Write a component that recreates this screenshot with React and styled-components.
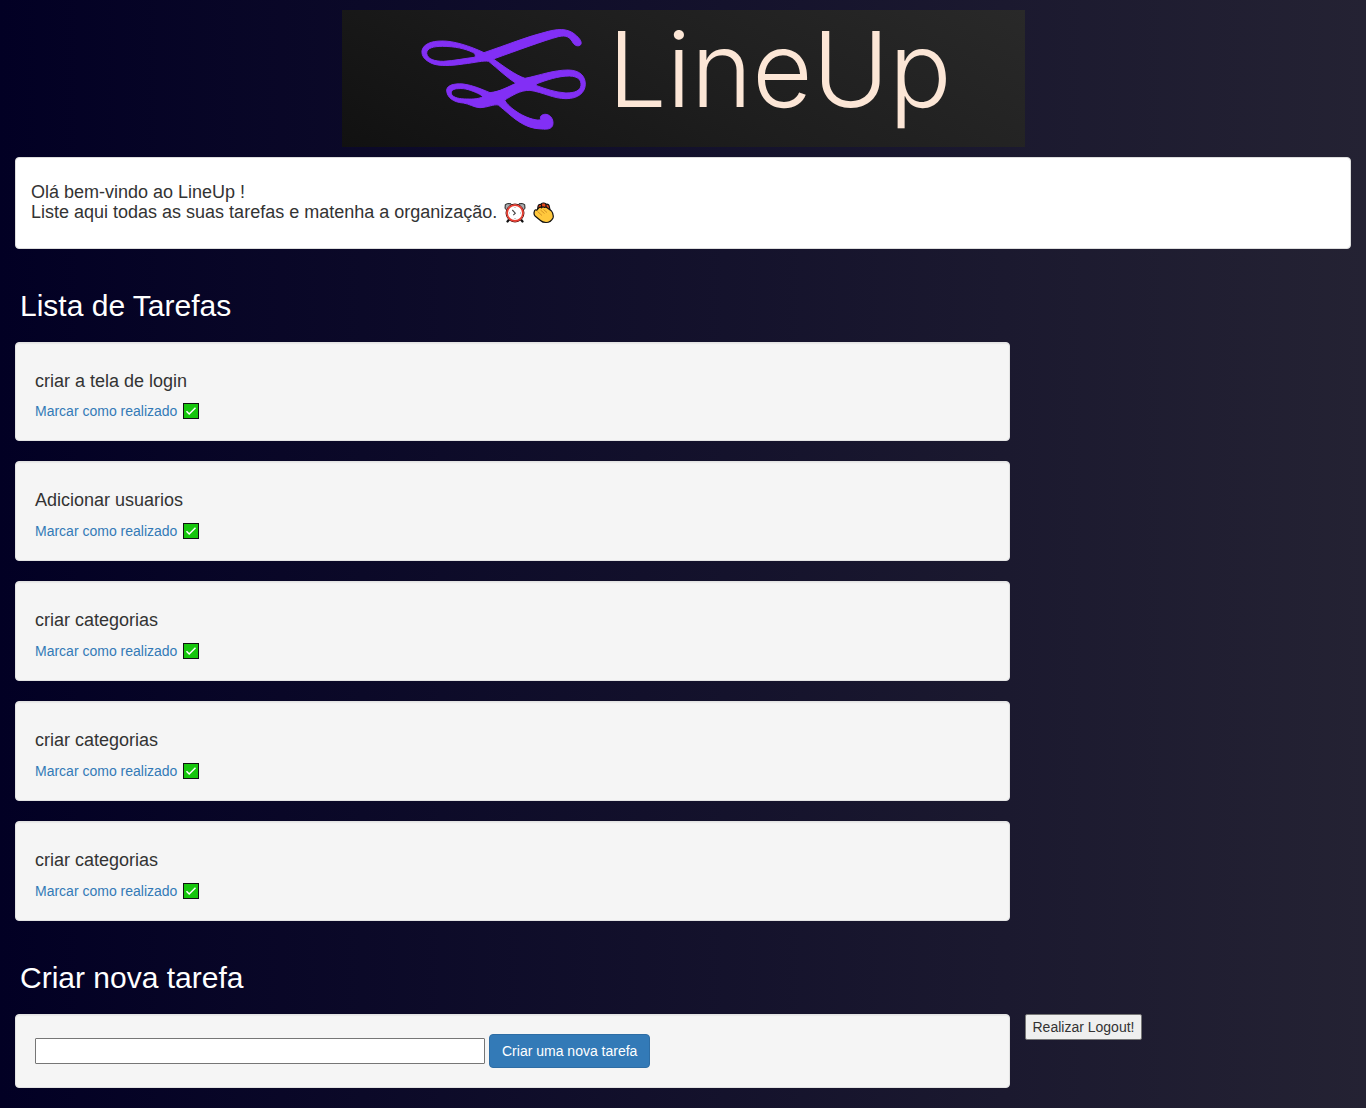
import React, { useState } from "react";
import styled, { createGlobalStyle } from "styled-components";

const GlobalStyle = createGlobalStyle`
  *, *::before, *::after { box-sizing: border-box; }
  body {
    margin: 0;
    font: 14px/20px "Liberation Sans", Arial, sans-serif;
    color: #333;
    background: linear-gradient(90deg, #020024 0%, #242233 100%);
  }
  input, button { font: inherit; color: inherit; }
`;

const Page = styled.div`
  padding: 10px 0 20px;
`;

const Banner = styled.header`
  width: 50%;
  margin: 0 auto 10px;
  background: linear-gradient(30deg, #111 0%, #1e1e1e 50%, #292929 100%);
`;

const Logo = styled.svg`
  display: block;
  width: 100%;
  overflow: visible;
`;

const Wordmark = styled.text`
  font-family: Inter, "Liberation Sans", sans-serif;
  font-size: 104px;
  font-weight: 300;
  fill: #fce6d6;
`;

const Welcome = styled.section`
  margin: 0 15px 20px;
  padding: 15px;
  background: #fff;
  border: 1px solid #ddd;
  border-radius: 4px;
`;

const Title = styled.h4`
  margin: 10px 0;
  font-size: 18px;
  font-weight: 500;
  line-height: 1.1;
`;

const Row = styled.div`
  display: grid;
  grid-template-columns: 3fr 1fr;
  align-items: start;
`;

const Column = styled.div`
  padding: 0 15px;
`;

const Heading = styled.h2`
  margin: 0;
  padding: 20px 5px;
  font-size: 30px;
  font-weight: 500;
  line-height: 1.1;
  color: #fff;
`;

const Well = styled.div`
  padding: 19px;
  background: #f5f5f5;
  border: 1px solid #e3e3e3;
  border-radius: 4px;
  box-shadow: inset 0 1px 1px rgba(0, 0, 0, 0.05);
`;

const TaskList = styled.ul`
  display: grid;
  gap: 20px;
  margin: 0 0 20px;
  padding: 0;
  list-style: none;
`;

const DoneLink = styled.a`
  display: flex;
  align-items: center;
  gap: 6px;
  color: #337ab7;
  text-decoration: none;
  &:hover { text-decoration: underline; }
`;

const Check = styled.svg`
  width: 16px;
  height: 16px;
`;

const Emoji = styled.svg`
  width: 22px;
  height: 22px;
  margin: -4px 0 -4px 7px;
  vertical-align: middle;
`;

const Form = styled.form`
  display: flex;
  align-items: center;
  gap: 4px;
`;

const TaskInput = styled.input`
  flex: 0 1 450px;
  min-width: 0;
  height: 26px;
  padding: 1px 2px;
  color: #000;
  background: #fff;
  border: 1px solid #767676;
  border-radius: 1px;
`;

const CreateButton = styled.button`
  padding: 6px 12px;
  color: #fff;
  background: #337ab7;
  border: 1px solid #2e6da4;
  border-radius: 4px;
  white-space: nowrap;
  cursor: pointer;
`;

const LogoutButton = styled.button`
  justify-self: start;
  padding: 2px 7px;
  background: #efefef;
  border: 1px solid #767676;
  border-radius: 2px;
  cursor: pointer;
`;

const CheckIcon = () => (
  <Check viewBox="0 0 16 16" aria-hidden="true">
    <rect x="0.5" y="0.5" width="15" height="15" fill="#16c60c" stroke="#111" />
    <path d="M3.5 8.3l2.7 2.7 6.3-6.3" fill="none" stroke="#fff" strokeWidth="1.5" />
  </Check>
);

const ClockIcon = () => (
  <Emoji viewBox="0 0 22 22" aria-hidden="true">
    <path d="M5.500 17l-2 2.500M16.500 17l2 2.500" stroke="#111" strokeWidth="2.2" strokeLinecap="round" />
    <path d="M1 6.500L1.300 2.500Q3.500 1 7 1.800L8 4 3.500 8.500zM21 6.500L20.700 2.500Q18.500 1 15 1.800L14 4l4.500 4.500z" fill="#a9adb0" stroke="#222" />
    <circle cx="11" cy="11" r="9" fill="#fff" stroke="#511" strokeWidth="1" />
    <circle cx="11" cy="11" r="7.9" fill="#fff" stroke="#e83b2e" strokeWidth="1.7" />
    <path d="M8.300 8l3 3.200-2 2" fill="none" stroke="#444" strokeWidth="1.1" />
    <path d="M11 5v1M11 16v1M5 11h1M16 11h1" stroke="#999" />
  </Emoji>
);

const ClapIcon = () => (
  <Emoji viewBox="0 0 22 22" aria-hidden="true">
    <path d="M4.500 8L5 4.500Q5.500 2 8 2.500 8.500 .8 10.500 1 12.500 .8 13 2.300 15.800 1.800 16.300 4.500L17 8z" fill="#e8481c" stroke="#111" strokeWidth="1.2" />
    <path d="M8.500 2.500v4M13 2.500v4" stroke="#111" strokeWidth="1.2" />
    <path d="M1.300 9.500Q1.800 7.300 3.800 8.200L5.800 5.800Q7.300 4.500 8.500 5.800 10 4 11.500 5.500 13 4.500 14.500 6L18.500 9Q21 12.300 20 16 17.800 20.500 13 20.500 9.500 20.500 7.500 18.500L2 14Q.5 12 1.300 9.500z" fill="#ffc83d" stroke="#111" strokeWidth="1.2" strokeLinejoin="round" />
    <path d="M4.500 9.500l4.500 4M7.500 8l4 3.500M10.500 7.500l3.500 3" fill="none" stroke="#d08f22" strokeWidth="0.9" />
  </Emoji>
);

const LineUpLogo = () => (
  <Logo viewBox="0 0 683 137" role="img" aria-label="LineUp">
    <g transform="translate(68 10) scale(.33333)">
      <path
        fill="#822ff5"
        stroke="#822ff5"
        strokeWidth="3"
        fillRule="evenodd"
        d="M95 63C130 62 180 78 222 98C290 75 350 50 415 34C455 24 480 28 500 48C512 58 516 68 512 74C506 80 496 78 490 70C480 52 470 44 445 50C400 62 320 92 250 117C280 138 315 165 345 175C390 166 430 150 475 150C510 151 526 168 526 193C525 218 505 236 468 236C430 236 400 217 360 211C330 210 305 228 284 240C290 255 330 290 375 299C385 301 392 300 392 298C388 288 398 282 408 283C424 285 432 302 428 316C424 328 410 328 395 327C340 326 310 292 265 255C250 252 235 262 210 263C190 262 180 252 160 249C130 247 110 232 110 210C112 196 130 190 160 192C190 196 215 208 240 218C270 215 295 200 318 190C290 172 262 145 236 124C220 121 195 128 160 132C120 138 90 138 70 132C45 122 34 108 36 92C40 72 65 63 95 63Z
        M97 79C70 79 50 84 50 100C52 118 75 124 100 124C135 122 165 115 193 112C199 108 195 100 188 97C165 86 135 79 97 79Z
        M378 192C410 180 445 168 478 168C505 169 514 180 513 196C511 212 495 219 468 219C435 217 405 206 380 197Z
        M145 206C130 206 122 212 124 222C130 234 150 237 170 237C190 238 210 236 218 230C216 225 195 215 175 209C165 206 155 205 145 206Z"
      />
    </g>
    <Wordmark x="266" y="97">LineUp</Wordmark>
  </Logo>
);

const initialTasks = [
  "criar a tela de login",
  "Adicionar usuarios",
  "criar categorias",
  "criar categorias",
  "criar categorias",
];

export default function App() {
  const [tasks, setTasks] = useState(initialTasks);
  const [name, setName] = useState("");

  const createTask = (event) => {
    event.preventDefault();
    if (name.trim()) setTasks([...tasks, name.trim()]);
    setName("");
  };

  const completeTask = (event, index) => {
    event.preventDefault();
    setTasks(tasks.filter((_, i) => i !== index));
  };

  return (
    <>
      <GlobalStyle />
      <Page>
        <Banner><LineUpLogo /></Banner>
        <Welcome>
          <Title>
            Olá bem-vindo ao LineUp !<br />
            Liste aqui todas as suas tarefas e matenha a organização.
            <ClockIcon /><ClapIcon />
          </Title>
        </Welcome>
        <Row>
          <Column>
            <Heading>Lista de Tarefas</Heading>
            <TaskList>
              {tasks.map((task, i) => (
                <Well as="li" key={i}>
                  <Title>{task}</Title>
                  <DoneLink href="#" onClick={(e) => completeTask(e, i)}>
                    Marcar como realizado <CheckIcon />
                  </DoneLink>
                </Well>
              ))}
            </TaskList>
            <Heading>
              <label htmlFor="new-task">Criar nova tarefa</label>
            </Heading>
          </Column>
        </Row>
        <Row>
          <Column>
            <Well>
              <Form onSubmit={createTask}>
                <TaskInput
                  id="new-task"
                  type="text"
                  value={name}
                  onChange={(e) => setName(e.target.value)}
                />
                <CreateButton type="submit">Criar uma nova tarefa</CreateButton>
              </Form>
            </Well>
          </Column>
          <LogoutButton type="button">Realizar Logout!</LogoutButton>
        </Row>
      </Page>
    </>
  );
}
